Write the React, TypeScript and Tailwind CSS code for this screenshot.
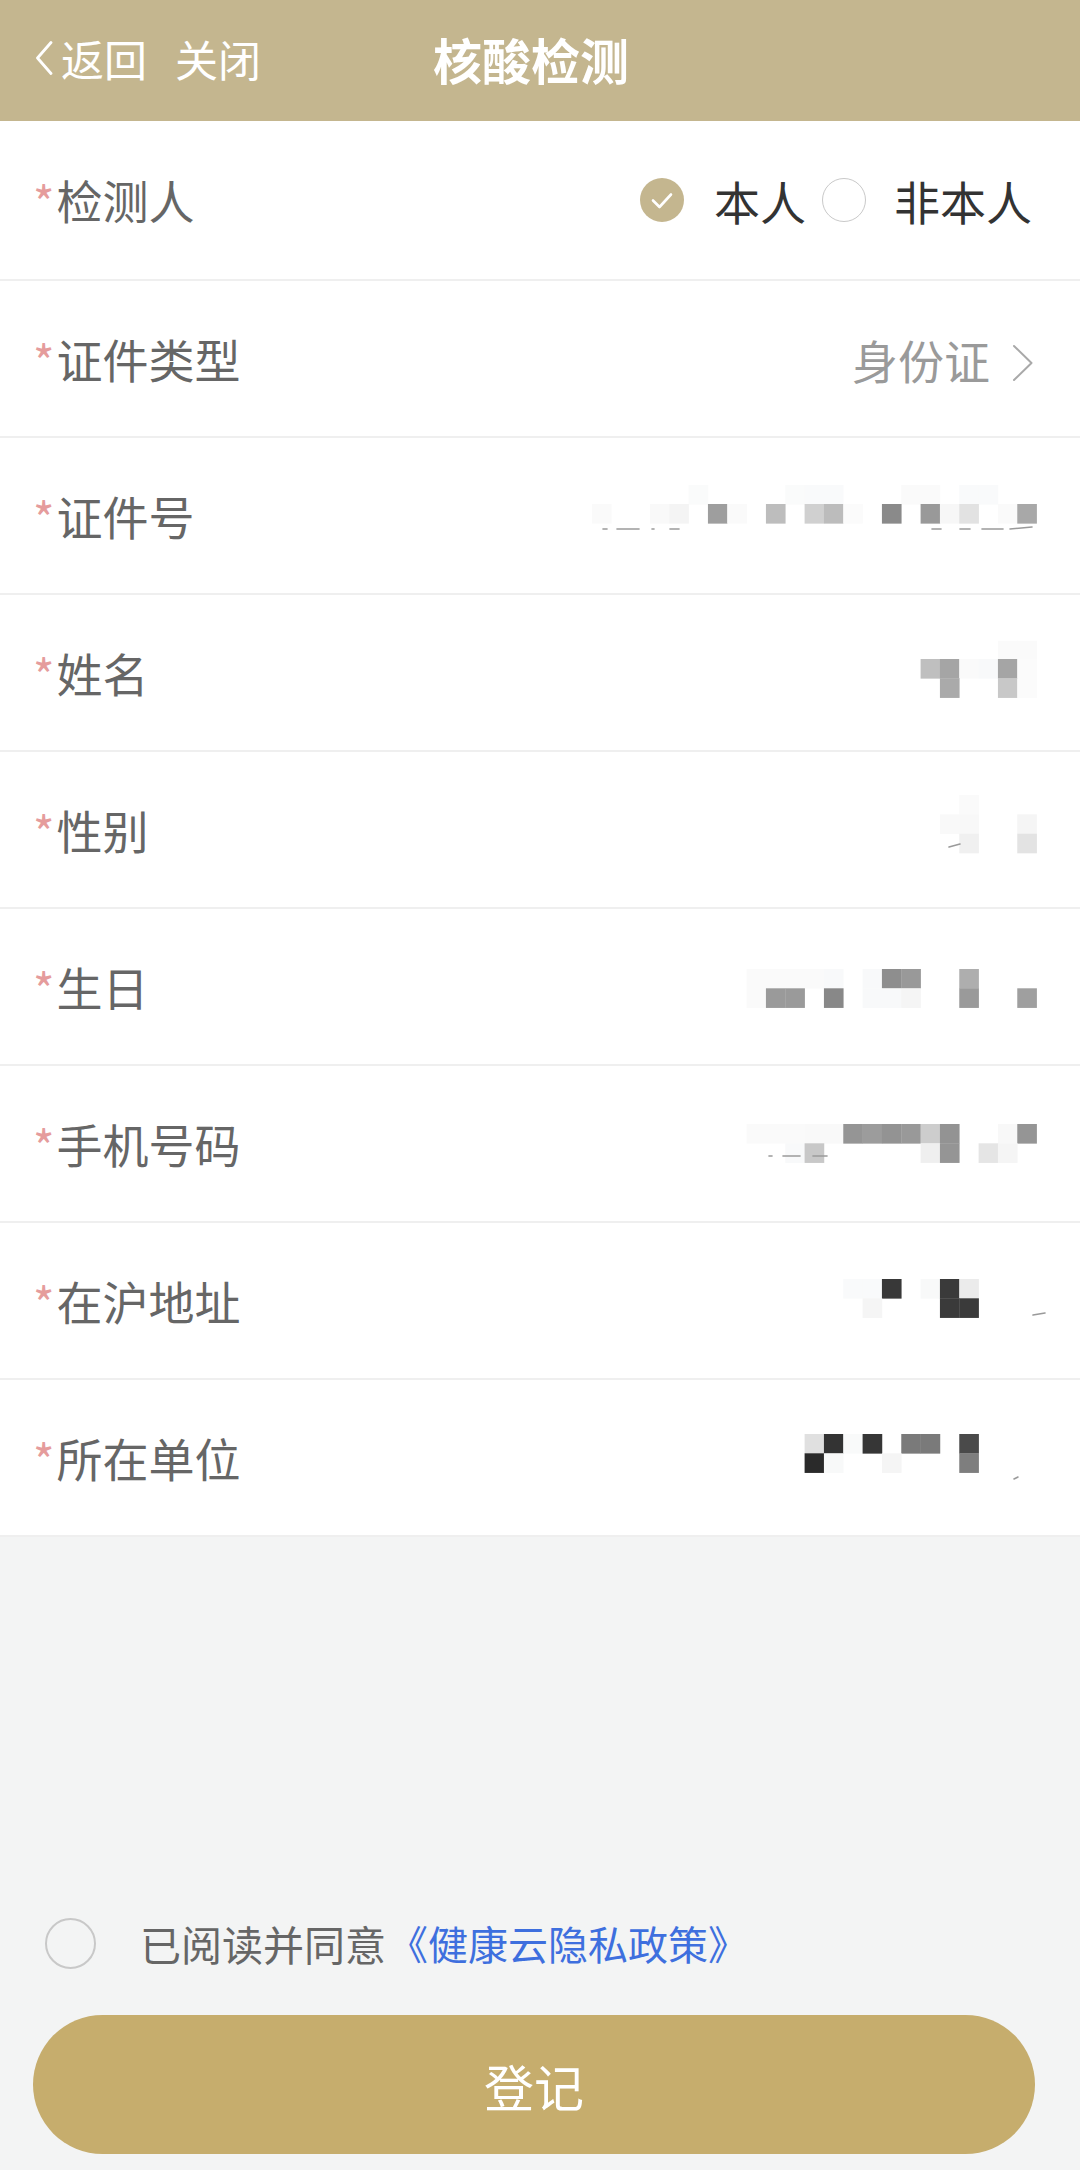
import type { ReactNode } from "react";

const S = 58 / 3;
const R = 1036.6;

type Cell = [number, number, string];
type Mark = [number, number, number, number];

type Mosaic = { top: number; cells: Cell[]; marks?: Mark[] };

const row = (y: number, list: [number, string][]): Cell[] =>
  list.map(([c, color]) => [c, y, color]);

const MOSAICS: Record<string, Mosaic> = {
  id: {
    top: 438,
    cells: [
      ...row(486, [
        [17, "#fafbfb"],
        [12, "#fafbfb"],
        [11, "#f9fafb"],
        [10, "#f9fafb"],
        [6, "#fafafa"],
        [5, "#fafafa"],
        [3, "#f9fafb"],
        [2, "#f9fafb"],
      ]),
      ...row(505, [
        [22, "#fafafa"],
        [19, "#f9f9f9"],
        [18, "#f4f4f4"],
        [16, "#9e9e9e"],
        [15, "#fafafa"],
        [13, "#bdbdbd"],
        [11, "#d0d0d0"],
        [10, "#bcbcbc"],
        [9, "#fbfbfb"],
        [7, "#8a8a8a"],
        [5, "#999999"],
        [4, "#f7f7f7"],
        [3, "#e2e2e2"],
        [1, "#fafafa"],
        [0, "#a8a8a8"],
      ]),
    ],
    marks: [
      [603, 530, 607, 530],
      [617, 530, 639, 530],
      [652, 530, 654, 530],
      [670, 530, 679, 530],
      [932, 530, 941, 530],
      [960, 530, 970, 530],
      [982, 530, 1003, 530],
      [1010, 530, 1032, 528],
    ],
  },
  name: {
    top: 595,
    cells: [
      ...row(641.7, [
        [1, "#fafafa"],
        [0, "#fafafa"],
      ]),
      ...row(660, [
        [5, "#bfbfbf"],
        [4, "#a5a5a5"],
        [3, "#fafafa"],
        [2, "#f8f9fa"],
        [1, "#a5a5a5"],
        [0, "#fbfbfb"],
      ]),
      ...row(679.3, [
        [4, "#aaaaaa"],
        [1, "#c8c8c8"],
        [0, "#fbfbfb"],
      ]),
    ],
  },
  sex: {
    top: 752,
    cells: [
      ...row(796, [[3, "#fafafa"]]),
      ...row(815.3, [
        [4, "#f9f9f9"],
        [3, "#f8f8f8"],
        [0, "#f5f5f5"],
      ]),
      ...row(834.7, [
        [3, "#f0f0f0"],
        [0, "#e3e3e3"],
      ]),
    ],
    marks: [[949, 848, 960, 845]],
  },
  birth: {
    top: 909,
    cells: [
      ...row(970, [
        [14, "#fafafa"],
        [13, "#fafafa"],
        [12, "#fafafa"],
        [11, "#fafafa"],
        [10, "#f8f9fa"],
        [8, "#f8f9fa"],
        [7, "#8e8e8e"],
        [6, "#999999"],
        [3, "#aeaeae"],
      ]),
      ...row(989.3, [
        [14, "#fafafa"],
        [13, "#9a9a9a"],
        [12, "#9a9a9a"],
        [10, "#888888"],
        [8, "#f8f9fa"],
        [7, "#f8f9fa"],
        [6, "#f5f5f5"],
        [3, "#9a9a9a"],
        [0, "#9f9f9f"],
      ]),
    ],
  },
  phone: {
    top: 1066,
    cells: [
      ...row(1125, [
        [14, "#fafafa"],
        [13, "#fafafa"],
        [12, "#fafafa"],
        [11, "#f9f9f9"],
        [10, "#f9f9f9"],
        [9, "#959595"],
        [8, "#9c9c9c"],
        [7, "#939393"],
        [6, "#999999"],
        [5, "#cdcdcd"],
        [4, "#939393"],
        [1, "#f8f8f8"],
        [0, "#959595"],
      ]),
      ...row(1144.3, [
        [12, "#f8f9fa"],
        [11, "#c8c8c8"],
        [5, "#efefef"],
        [4, "#959595"],
        [2, "#e5e5e5"],
        [1, "#f5f5f5"],
      ]),
    ],
    marks: [
      [769, 1157, 772, 1157],
      [783, 1157, 800, 1157],
      [813, 1157, 827, 1157],
    ],
  },
  address: {
    top: 1223,
    cells: [
      ...row(1280, [
        [9, "#f9fafb"],
        [8, "#f9fafb"],
        [7, "#383838"],
        [5, "#f8f9f9"],
        [4, "#3a3a3a"],
        [3, "#ebebeb"],
      ]),
      ...row(1299.3, [
        [8, "#f5f5f5"],
        [4, "#3a3a3a"],
        [3, "#3a3a3a"],
      ]),
    ],
    marks: [[1033, 1316, 1045, 1314]],
  },
  company: {
    top: 1380,
    cells: [
      ...row(1435, [
        [11, "#e0e0e0"],
        [10, "#333333"],
        [9, "#f9fafa"],
        [8, "#363636"],
        [6, "#7a7a7a"],
        [5, "#7a7a7a"],
        [3, "#4a4a4a"],
      ]),
      ...row(1454.3, [
        [11, "#2a2a2a"],
        [10, "#f8f9f9"],
        [7, "#f5f5f5"],
        [3, "#7e7e7e"],
      ]),
    ],
    marks: [[1014, 1480, 1018, 1478]],
  },
};

// pixelated (masked) value, drawn in page coordinates
function MaskedValue({ m }: { m: Mosaic }) {
  const x0 = 572;
  const w = 478;
  return (
    <svg
      width={w}
      height={77}
      viewBox={`${x0} ${m.top + 40} ${w} 77`}
      className="-mr-[13px] shrink-0"
    >
      {m.cells.map(([c, y, color], i) => (
        <rect key={i} x={R - (c + 1) * S} y={y} width={S + 0.3} height={S + 0.3} fill={color} />
      ))}
      {m.marks?.map(([x1, y1, x2, y2], i) => (
        <line key={i} x1={x1} y1={y1} x2={x2} y2={y2} stroke="#9a9a9a" strokeWidth={1.6} strokeLinecap="round" />
      ))}
    </svg>
  );
}

function FormRow({ label, first, children }: { label: string; first?: boolean; children?: ReactNode }) {
  return (
    <div
      className={`flex items-center justify-between bg-white border-b-2 border-[#efefef] pl-[33px] pr-[43px] ${
        first ? "h-[160px]" : "h-[157px]"
      }`}
    >
      <div className="flex items-start text-[46px] leading-none text-[#666666]">
        <span className="text-[#e59c9c] mr-[2px] mt-[2px]">*</span>
        <span>{label}</span>
      </div>
      {children}
    </div>
  );
}

function Radio({ checked }: { checked?: boolean }) {
  if (checked) {
    return (
      <svg width="44" height="44" viewBox="0 0 44 44" className="shrink-0">
        <circle cx="22" cy="22" r="22" fill="#c4b68f" />
        <path d="M13 22.5 L19.5 29 L31 16.5" fill="none" stroke="#fff" strokeWidth="2.6" strokeLinecap="round" strokeLinejoin="round" />
      </svg>
    );
  }
  return <div className="w-[44px] h-[44px] shrink-0 rounded-full border-[1.5px] border-[#c9c9c9] bg-white" />;
}

export default function App() {
  return (
    <div className="w-[1080px] min-h-[2170px] flex flex-col bg-[#f3f4f4] font-['Noto_Sans_CJK_SC','Noto_Sans',sans-serif]">
      {/* Header */}
      <header className="h-[121px] shrink-0 bg-[#c4b68f] flex items-center pl-[35px] pb-[5px] text-white">
        <svg width="18" height="34" viewBox="0 0 18 34" className="shrink-0">
          <path d="M16 1.5 L2.5 17 L16 32.5" fill="none" stroke="#fff" strokeWidth="2.8" strokeLinecap="round" strokeLinejoin="round" />
        </svg>
        <span className="ml-[8px] text-[43px] leading-none">返回</span>
        <span className="ml-[28px] text-[43px] leading-none">关闭</span>
        <span className="ml-[172px] text-[49px] leading-none font-bold">核酸检测</span>
      </header>

      {/* Form */}
      <div className="flex flex-col">
        <FormRow label="检测人" first>
          <div className="flex items-center mr-[5px] text-[46px] leading-none text-[#333333]">
            <Radio checked />
            <span className="ml-[30px]">本人</span>
            <span className="ml-[16px]">
              <Radio />
            </span>
            <span className="ml-[28px]">非本人</span>
          </div>
        </FormRow>
        <FormRow label="证件类型">
          <div className="flex items-center mr-[3px] text-[46px] leading-none text-[#9a9a9a]">
            <span>身份证</span>
            <svg width="22" height="38" viewBox="0 0 22 38" className="ml-[22px] mt-[8px]">
              <path d="M2 2 L19.5 19 L2 36" fill="none" stroke="#a9a9a9" strokeWidth="2" strokeLinecap="round" strokeLinejoin="round" />
            </svg>
          </div>
        </FormRow>
        <FormRow label="证件号">
          <MaskedValue m={MOSAICS.id} />
        </FormRow>
        <FormRow label="姓名">
          <MaskedValue m={MOSAICS.name} />
        </FormRow>
        <FormRow label="性别">
          <MaskedValue m={MOSAICS.sex} />
        </FormRow>
        <FormRow label="生日">
          <MaskedValue m={MOSAICS.birth} />
        </FormRow>
        <FormRow label="手机号码">
          <MaskedValue m={MOSAICS.phone} />
        </FormRow>
        <FormRow label="在沪地址">
          <MaskedValue m={MOSAICS.address} />
        </FormRow>
        <FormRow label="所在单位">
          <MaskedValue m={MOSAICS.company} />
        </FormRow>
      </div>

      {/* Agreement + submit */}
      <div className="mt-auto flex flex-col px-[33px] pb-[16px]">
        <div className="flex items-center h-[52px] pl-[12px]">
          <div className="w-[51px] h-[51px] rounded-full border-2 border-[#c8c8c8]" />
          <span className="ml-[44px] text-[41px] leading-none text-[#666666]">已阅读并同意</span>
          <span className="ml-[2px] text-[40px] leading-none text-[#3e6fde]">《健康云隐私政策》</span>
        </div>
        <button className="mt-[46px] h-[139px] w-[1002px] rounded-full bg-[#c6ad6d] text-white text-[50px] leading-none">
          登记
        </button>
      </div>
    </div>
  );
}
